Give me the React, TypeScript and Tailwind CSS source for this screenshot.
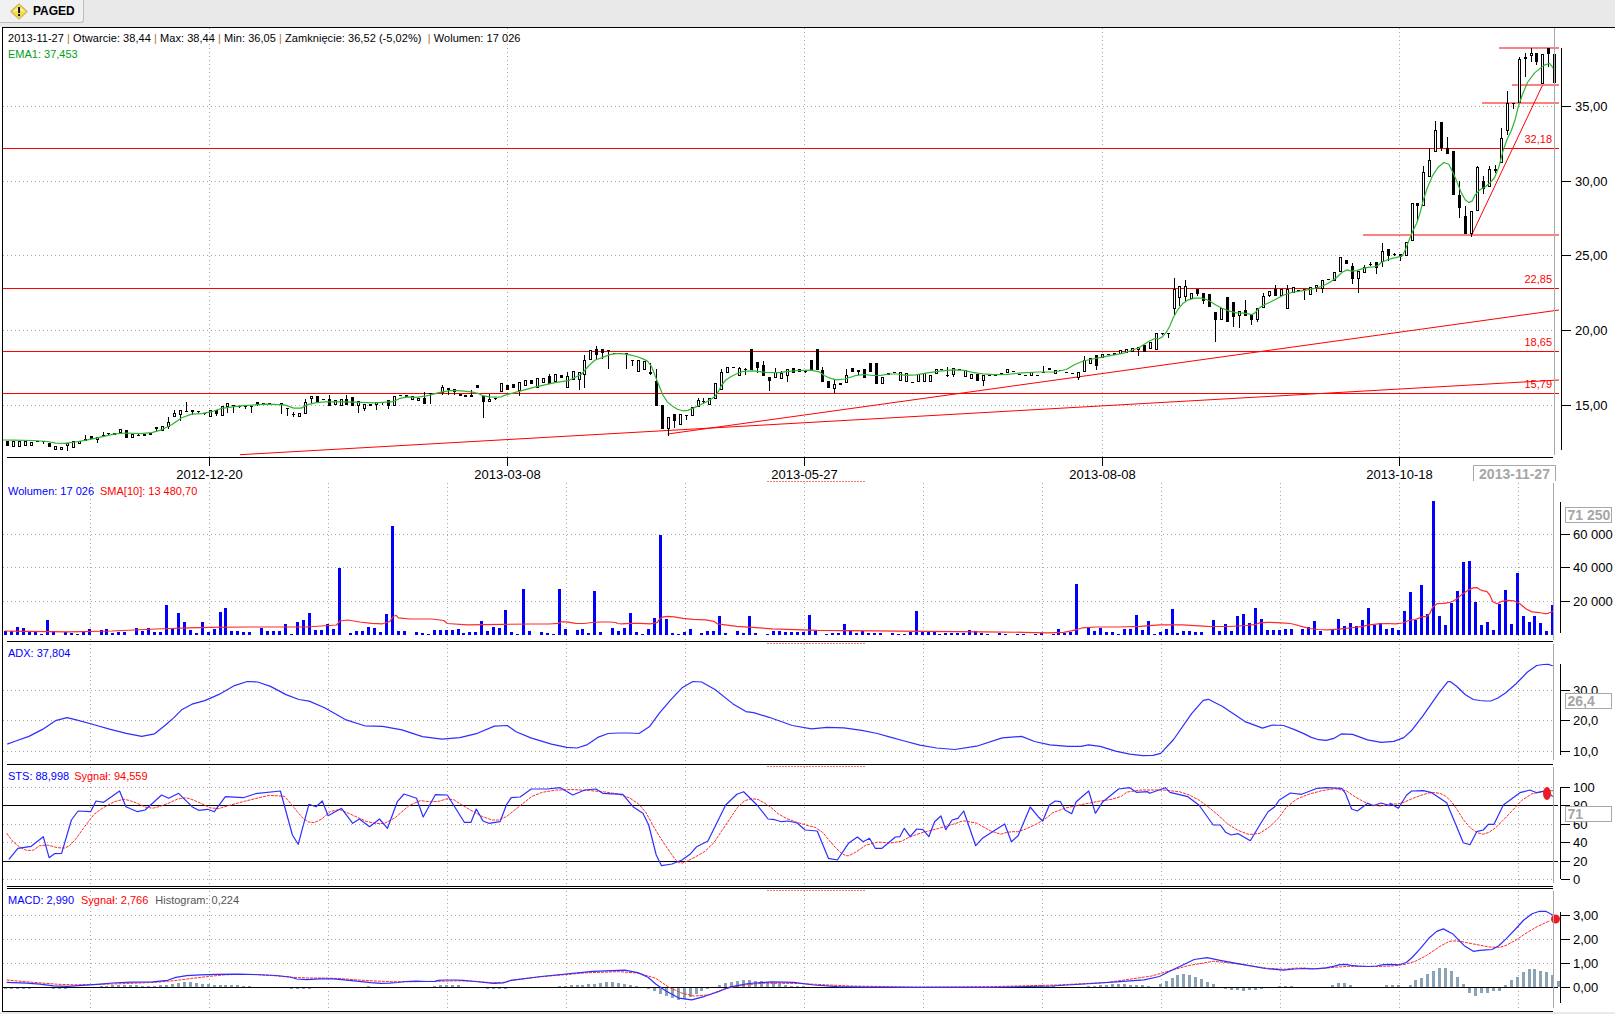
type Candle = [number, number, number, number?, number?];

// candle data read off the chart, [filled, bodyTop, bodyBottom, wickTop, wickBottom], y = base + v / 3
const seg1: Candle[] = [
  [1,422,437],[0,422,440],[0,422,440],[0,422,437],[0,425,437],[1,424,424],[1,424,424,424,432],[1,430,440],[0,437,449],[0,440,449],
  [0,428,437,428,452],[0,422,443],[0,422,431],[1,418,422,405,422],[1,407,418],[0,410,420,410,428],[1,406,406,395,406],[1,400,400,400,407],[0,398,406],[0,386,398],
  [1,390,413],[0,403,413],[1,405,406,402,409],[1,403,407],[0,398,405],[1,380,388,380,392],[0,379,394],[0,367,382,352,386],[0,340,350,330,350],[0,331,344,331,362],
  [1,332,332,306,332],[1,331,336,331,344],[1,332,332,332,340],[1,338,338,338,344],[0,331,350],[1,331,342,331,347],[0,319,347],[0,310,320,310,338],[1,316,316,316,338],[1,318,318,318,325],
  [1,318,322,318,326],[1,318,318,318,338],[1,307,314,307,318],[1,310,310],[0,310,316],[1,311,311],[0,310,316,310,341],[1,325,325,325,347],[1,343,346,336,352],[0,340,350],
  [0,307,341,298,341],[0,289,297,289,312],[1,289,306],[1,296,296],[1,296,317,286,317],[0,301,316],[0,297,317],[1,296,316,286,316],[1,292,317],[0,304,317,304,338],
  [0,313,327,313,332],[0,313,317],[0,307,314,307,330],[1,305,305,305,316],[1,300,317,300,326],[0,288,317],[1,286,286],[0,286,292],[0,289,301],[0,295,302],
  [1,293,312,277,312],[1,278,278,278,311],[1,278,278],[0,262,278,255,285],[1,263,270,263,286],[1,268,277,268,286],[1,281,288],[1,286,290],[1,284,290,270,290],[1,256,263],
  [1,287,305,287,353],[0,296,305,283,305],[1,293,297,293,300],
];
const seg2: Candle[] = [
  [0,249,276],[1,255,270],[1,252,264],[0,246,273,246,288],[0,240,258],[1,240,252],[0,234,264],[0,234,249],[1,228,252,222,252],[0,222,246],
  [1,225,234],[0,228,264,216,264],[0,213,240],[0,216,240,225,270],[0,180,225,165,264],[0,150,180],[1,147,165,138,180],
];
const seg3: Candle[] = [
  [1,88,100,88,118],[1,90,94,90,146],[1,98,98],[1,98,98],[1,100,100,100,146],[1,120,120,120,137],[0,120,157],[0,122,150],[0,155,162,128,166],[1,183,258,148,258],
  [1,256,326],[0,291,326,291,347],[1,283,302,283,324],[0,283,314],[1,286,286,286,300],[0,262,287],[0,240,262,235,262],[1,243,245,235,252],[0,234,254],[0,190,236],
  [0,155,209,148,209],[0,142,160],[1,140,145],[0,145,167,142,167],[1,147,147,145,165],[1,88,150],[1,127,145,127,158],[1,135,168,122,168],[1,172,182,172,212],[0,157,173,145,173],
  [0,158,176,152,176],[0,148,168,148,185],[1,145,160],[0,148,155],[1,153,153,150,160],[1,120,150],[1,88,150],[1,150,186,140,186],[1,182,203],[0,193,208,180,218],
  [1,190,194],[0,165,190,147,190],[1,145,155],[0,150,155,150,165],[1,147,173],[1,130,155],[1,130,192],[0,170,192],[0,158,165],[1,155,155],
  [0,155,183],[0,158,187],[1,187,187],[0,162,187],[0,160,187],[0,165,187],[0,146,162],[1,146,146],[1,165,167,142,172],[0,145,165,145,170],
  [1,148,148],[0,150,170],[0,162,178],[1,163,182],[0,166,182,166,197],[1,165,165],[1,165,165],
];
const seg4: Candle[] = [
  [1,219,219],[0,207,219],[1,213,213],[1,222,222],[1,225,225],[0,216,228],[1,225,225],[1,216,216,198,216],[1,204,210],[0,210,222],
  [1,210,210],[1,216,216],[1,219,219],[0,216,234,216,240],[0,180,216,168,216],[0,174,192],[1,165,198,165,210],[0,162,174],[1,162,162],[0,159,165],
  [0,150,162],[0,147,159],[0,144,156],[0,141,150,141,168],[1,135,156],[0,126,147],
];
const seg5: Candle[] = [
  [0,370,420],[1,370,370,370,375],[1,370,372,370,385],[0,238,296,205,315],[0,228,265,228,288],[0,229,260,210,272],[0,250,268],[1,238,252,238,258],[1,250,272,250,282],[1,252,290],
  [1,305,330,305,395],[0,294,330],[1,262,335],[1,277,322,277,350],[0,304,317,304,353],[1,300,317,270,317],[1,316,330,316,345],[0,295,330,295,335],[0,258,295,250,295],[0,244,258,244,262],
  [1,238,258,225,258],[0,238,258],[0,238,298,225,298],[0,232,248],[1,240,240],[1,238,238,238,270],[0,232,254],[0,224,234,224,246],[0,210,236,210,250],[1,208,208],
  [0,186,214],[0,141,186],[1,151,162],[1,168,206,158,222],[0,182,208,182,248],[0,172,190,166,190],[1,162,162,155,168],[1,157,174,157,193],[0,124,157,100,170],[1,117,139,117,153],
  [1,133,133,128,138],[1,133,140,133,152],
];
const seg6: Candle[] = [
  [0,667,707],[0,550,664],[1,550,557,550,600],[0,455,557,438,557],[0,421,470,385,470],[0,331,395,303,395],[1,307,385,307,392],[1,385,401,351,401],[1,394,524],[1,526,564,484,595],
  [1,589,643,558,643],[0,574,643,574,652],[0,442,572,438,572],[1,484,506,468,522],[0,448,500,438,500],[1,447,452,436,458],[0,355,430,324,430],[0,250,334,214,344],[1,248,248,248,268],[0,118,248,112,248],
  [0,110,116,100,170],[0,100,107,85,125],[1,100,125,100,135],[0,103,193],[1,85,103,85,140],[0,103,190],
];

const candleX = (i: number) => 7.3 + i * 5.95;

const segments: [Candle[], number, number][] = [
  [seg1, 0, 300],
  [seg2, 83, 300],
  [seg3, 100, 320],
  [seg4, 167, 300],
  [seg5, 193, 210],
  [seg6, 235, 20],
];

const candles = segments.flatMap(([list, start, base]) =>
  list.map(([fill, top, bot, wt, wb], n) => ({
    x: Math.round(candleX(start + n)),
    fill,
    top: Math.round(base + top / 3),
    bot: Math.round(base + bot / 3),
    wt: base + (wt ?? top) / 3,
    wb: base + (wb ?? bot) / 3,
  })),
);

type P = [number, number];
const crop = (x0: number, sx: number, y0: number, sy: number, list: number[]): P[] => {
  const out: P[] = [];
  for (let i = 0; i < list.length; i += 2) out.push([x0 + list[i] / sx, y0 + list[i + 1] / sy]);
  return out;
};
const seen = (list: number[]) => crop(0, 0.9703, 0, 0.9703, list);
const line = (pts: P[]) => pts.map(([x, y]) => `${x.toFixed(1)},${y.toFixed(1)}`).join(' ');

// corner cutting so the averaged series read as curves
const smooth = (pts: P[], rounds = 1): P[] => {
  let cur = pts;
  for (let r = 0; r < rounds; r++) {
    const next: P[] = [cur[0]];
    for (let i = 0; i < cur.length - 1; i++) {
      const [ax, ay] = cur[i];
      const [bx, by] = cur[i + 1];
      next.push([ax * 0.75 + bx * 0.25, ay * 0.75 + by * 0.25], [ax * 0.25 + bx * 0.75, ay * 0.25 + by * 0.75]);
    }
    next.push(cur[cur.length - 1]);
    cur = next;
  }
  return cur;
};

const ema = smooth([
  ...crop(0, 3, 300, 3, [8,420,130,422,180,432,240,424,300,412,360,398,440,402,500,385,560,343,620,340,680,320,840,310,895,329,930,310,990,304,1170,310,1210,290,1260,293,1340,272,1380,272,1430,278,1455,290,1500,292]),
  [505,395],[546,384],[577,379],[593,361],
  ...crop(600, 3, 320, 3, [0,115,40,100,80,102,120,112,150,127,170,180,195,240,225,265,255,275,290,260,330,240,350,225,370,185,400,165,440,150,520,160,580,152,650,150,680,172,720,182,780,162,830,168,880,160,930,168,1000,155,1080,148,1130,160,1200,165]),
  [1030,372],[1062,372],[1079,362],[1097,358],[1134,351],[1154,338],
  ...crop(1100, 3, 210, 3, [180,388,205,360,225,310,255,272,295,262,325,270,355,290,400,308,440,310,460,315,480,290,520,272,560,250,620,240,660,232,700,212,735,178,760,185,800,172,830,170,850,152,900,140]),
  ...crop(1300, 3, 20, 3, [310,705,335,640,355,600,375,520,405,450,440,420,465,470,490,535,512,552,530,515,565,495,590,465,615,370,640,320,660,240,690,170,745,125,760,145]),
] as P[]);

const volumeTops = [
  ...crop(0, 2.24, 490, 3, [108,390,375,345,399,369,413,396,453,396,494,366,507,354,640,402,666,396,680,390,693,369,733,402,760,234,868,372,881,108,1080,393,1133,360,1172,297,1253,297,1333,303,1413,369,1467,384,1480,135,1493,387]),
  ...crop(690, 2.24, 490, 3, [68,378,133,378,267,375,345,402,507,363,865,282,1000,375,1027,393,1078,357,1172,390,1199,402,1226,378,1240,372,1253,399,1266,354,1280,387]),
  ...crop(690, 2.24, 490, 3, [1399,393,1452,387,1480,399,1506,390]),
  ...crop(1300, 3, 430, 3, [8,597,26,592,44,573,62,603,80,614,98,597,116,567,134,588,152,579,170,588,188,570,206,534,224,585,242,579,260,597,275,594,293,600,311,543,329,486,347,570,365,465,383,552,401,213,419,558,437,585,455,519,473,483,491,396,509,393,527,516,545,585,563,576,581,600,599,522,617,480,632,582,650,429,668,558,686,576,704,558,722,579,740,603,756,525]),
];

const lowBars = [4,6,3,5,0,3,7,4,2,6,5,3,1,4,8,3,0,5,2,6,4,7,3,2,5,1,6,4,3,0];
const quiet = (i: number) => (i >= 165 && i <= 176 ? 0.25 : i >= 120 && i < 165 ? 0.6 : 1);
const volumes = Array.from({ length: 261 }, (_, i) => Math.round(lowBars[(i * 7 + (i >> 3)) % lowBars.length] * quiet(i)));
volumeTops.forEach(([x, y]) => {
  volumes[Math.round((x + 2 - 7.3) / 5.95)] = 634.7 - y;
});

const sma = smooth([
  [5,631],[90,632],[178,628],[220,627],[335,627],[341.5,619],[366,623],[388,624],[395,614],[399.5,619],[442,619],[449,625],
  [522,624],[558,624],[562,621],[580,624],[596,622],[615,622],[618,624],[634,623],[656,624],[661,617],[670,616],[687,619],[712,620],[719,625],
  [790,630],[900,631],[1010,632],[1060,633],[1075,630],[1085,627],[1130,627],[1170,624],[1220,627],[1255,625],
  [1261,622],[1288,623],[1297,625],
  ...crop(1300, 3, 430, 3, [0,588,40,598,95,600,185,590,205,585,245,580,300,582,330,570,350,568,365,560,385,560,403,521,440,520,465,512,495,485,527,470,545,482,565,485,583,525,615,510,650,513,688,545,720,548,740,552,760,543]),
] as P[]);

const adx = smooth([
  ...seen([7,722,35,712,60,695,80,700,115,710,145,716,165,700,180,685,205,678,235,661,255,662,285,678,305,681,345,704,380,705,420,718,455,715,488,701,505,713,545,725,565,726,585,712,605,711,625,712,645,685,668,661,685,662,720,690,735,692,780,708,810,705,845,710,870,717,900,725,935,728,985,712,1010,722,1045,725,1060,722,1090,731,1115,734,1130,730,1165,680,1175,678,1220,708,1240,702]),
  ...crop(1300, 3, 640, 3, [0,275,45,298,90,302,135,275,225,308,300,303,345,262,440,125,455,125,510,177,550,183,580,183,630,150,700,78,740,72,758,77]),
]);

const stsBlue = [
  ...crop(0, 2.24, 745, 3, [20,343,40,310,70,304,97,275,110,338,122,326,138,325,160,225,175,198,203,200,215,168,232,172,268,138,282,185,308,200,325,195,362,150,378,160,400,145,430,185,445,196,465,193,480,200,505,155,545,158,572,146,628,138,655,270,668,298,692,178,708,185,722,168,735,212,765,190,790,235,805,222,828,245,850,222,868,250,890,170,905,147,933,160,948,216,975,149,1002,150,1040,232,1055,232,1067,192,1082,228,1095,235,1120,230,1135,178,1145,158,1165,156,1190,132,1225,132,1255,128,1283,150,1310,135,1335,132,1350,145,1395,148,1418,185,1440,205,1453,240,1470,330,1482,362]),
  [672,864],[682,860],
  ...crop(690, 2.24, 745, 3, [0,328,15,305,40,288,80,180,105,148,120,140,150,180,175,222,190,224,205,230,220,228,240,234,258,255,285,258,310,340,330,345,355,295,375,276,388,290,402,280,415,310,430,310,460,276,470,275,480,250,493,275,508,252,522,254,535,275,548,230,562,213,573,254,587,225,600,220,613,198,640,302,655,280,705,237,720,290,735,272,762,186,780,215,790,228,805,180,818,168,830,170,840,195,855,206,865,170,893,138,908,205,925,170,960,132,985,128,1000,142,1025,140,1030,145,1065,128,1075,142,1115,155,1140,180,1172,240,1188,240,1200,262,1212,270,1228,266,1255,287,1280,232,1295,200,1310,185,1320,165,1345,144,1370,148,1405,130,1425,128,1460,130,1468,145,1482,192,1495,198,1518,175,1530,182,1548,174,1568,182]),
  ...crop(1300, 3, 640, 3, [270,490,295,505,320,465,335,453,370,452,395,458,440,488,470,560,490,608,510,614,530,575,550,570,565,553,582,553,610,495,660,458,690,450,710,458,740,452,758,470]),
] as P[];

const stsRed = smooth([
  ...crop(0, 2.24, 745, 3, [15,265,35,300,68,322,95,296,140,312,160,300,195,235,215,200,270,160,300,170,335,192,365,182,410,155,440,168,480,195,520,178,630,142,660,190,685,230,710,234,750,188,790,210,830,235,870,236,930,165,975,172,1010,158,1040,185,1095,225,1125,225,1165,182,1200,145,1260,132,1340,138,1400,150,1440,185,1470,260,1510,340]),
  [680,864],
  ...crop(690, 2.24, 745, 3, [0,345,45,310,80,240,115,170,145,158,175,180,205,215,250,237,290,250,320,300,345,332,360,332,405,290,465,295,500,270,575,244,625,222,690,270,715,260,740,260,790,228,820,195,900,172,960,160,985,135,1085,135,1130,155,1175,200,1215,250,1265,275,1310,235,1345,170,1400,140,1460,128,1500,165,1535,184,1568,180]),
  ...crop(1300, 3, 640, 3, [270,492,300,492,350,470,395,456,430,462,460,490,500,555,540,585,575,575,620,530,680,465,740,452,760,452]),
] as P[]);

const macdBlue = smooth([
  ...crop(0, 3, 850, 3, [20,397,100,400,180,410,270,405,360,397,490,395,540,378,620,373,735,372,860,378,900,390,980,385,1060,392,1130,400,1180,399,1230,393,1300,395,1320,390,1380,390,1420,394,1500,402]),
  ...seen([500,950,600,940,625,945,640,958,665,972,690,965,715,955,760,952,800,957,850,958,1000,958,1080,953,1120,950,1140,940,1165,928,1190,933,1240,942]),
  ...crop(1300, 3, 640, 3, [0,985,40,987,90,982,130,971,160,978,220,980,260,972,310,975,345,945,400,878,440,863,510,935,550,930,585,928,630,885,685,825,730,810,758,825]),
]);

const macdRed = smooth([
  ...crop(0, 3, 850, 3, [20,390,100,397,200,405,300,403,400,400,500,395,600,382,700,372,800,375,900,384,1000,384,1100,392,1200,396,1300,394,1400,392,1500,400]),
  ...seen([500,950,590,942,630,945,655,962,680,968,710,957,750,953,850,958,1000,957,1100,952,1170,932,1200,935,1240,941]),
  ...crop(1300, 3, 640, 3, [0,983,50,987,100,982,160,978,220,980,300,977,360,960,440,905,470,902,510,910,590,925,630,912,700,865,750,842]),
]);

// histogram runs: [first bar, heights...], negative goes below the zero line
const histRuns: number[][] = [
  [0,-1,-1,-1,-1,-1,0,0,0,-1,-1,-1],
  [16,1,1,2,2,2,2,2,1,1,1,2,2,3,4,5,5,4,3,3,2,2,2,2,2,1,1],
  [48,-1,-1,-1,-1],
  [61,1],
  [72,1,2,2,2,2],
  [81,-1,-1,-1,-1],
  [93,1,1,2,2,2,3,3,4,5,5,4,3,2,1],
  [108,-1,-3,-6,-8,-10,-12,-11,-9,-6,-3,-1],
  [120,2,4,5,6,7,7,6,6,5,4,3,2,1,1,1],
  [172,1,2,2,1,1],
  [182,1,1,2,2,3,3,3,2,2,2,1],
  [194,3,6,9,12,13,12,10,8,5,3],
  [205,-1,-2,-2,-3,-2,-2,-1],
  [214,1,1,1],
  [223,2,4,4,2,0,0,0,0,0,2,2,2,0,2,7,9,13,16,19,19,16,10,3,-5,-8,-5,-5,-3,-3,2,7,10,15,18,18,16,15,12,6],
];
const hist = histRuns.flatMap(([start, ...hs]) => hs.map((h, n) => ({ i: start + n, h })));

const mainGridX = [209.5, 507.5, 804.5, 1102.5, 1399.5];
const lowerGridX = [90.5, 209.5, 328.5, 447.5, 566.5, 685.5, 804.5, 923.5, 1042.5, 1161.5, 1280.5, 1399.5, 1518.5];
const dates = ['2012-12-20', '2013-03-08', '2013-05-27', '2013-08-08', '2013-10-18'];

const Dotted = ({ x1, y1, x2, y2 }: { x1: number; y1: number; x2: number; y2: number }) => (
  <line x1={x1} y1={y1} x2={x2} y2={y2} stroke="#a8a8a8" strokeDasharray="1 3" shapeRendering="crispEdges" />
);

const Solid = ({ x1, y1, x2, y2, color = '#000000' }: { x1: number; y1: number; x2: number; y2: number; color?: string }) => (
  <line x1={x1} y1={y1} x2={x2} y2={y2} stroke={color} shapeRendering="crispEdges" />
);

const Hatch = ({ y }: { y: number }) => (
  <line x1={767} y1={y} x2={865} y2={y} stroke="#ff7a7a" strokeDasharray="2 1" shapeRendering="crispEdges" />
);

const Tick = ({ y, label, axis = 1560.5, len = 9, tx = 1573 }: { y: number; label: string; axis?: number; len?: number; tx?: number }) => (
  <g>
    <Solid x1={axis} y1={y} x2={axis + len} y2={y} />
    <text x={tx} y={y + 4} className="fill-black text-[13px]">{label}</text>
  </g>
);

const ValueBox = ({ y, label }: { y: number; label: string }) => (
  <g>
    <rect x={1565.5} y={y + 0.5} width={46} height={15} fill="#ffffff" stroke="#a8a8a8" shapeRendering="crispEdges" />
    <text x={1567.5} y={y + 13} className="fill-[#a6a6a6] text-[14px] font-bold">{label}</text>
  </g>
);

const Series = ({ pts, color, width = 1.2, dash }: { pts: P[]; color: string; width?: number; dash?: string }) => (
  <polyline points={line(pts)} fill="none" stroke={color} strokeWidth={width} strokeLinejoin="round" strokeDasharray={dash} />
);

const PriceLevel = ({ y, label }: { y: number; label: string }) => (
  <g>
    <Solid x1={3} y1={y} x2={1559} y2={y} color="#ff0000" />
    <text x={1552} y={y - 6} textAnchor="end" className="fill-[#ff0000] text-[11px]">{label}</text>
  </g>
);

const Level = ({ y, from }: { y: number; from: number }) => (
  <rect x={from} y={y - 1} width={1559 - from} height={2} fill="#ff8080" shapeRendering="crispEdges" />
);

const MainChart = () => (
  <svg viewBox="3 28 1612 455" className="block h-full w-full">
    {[106.5, 181.5, 255.5, 330.5, 405.5].map(y => <Dotted key={y} x1={3} y1={y} x2={1554} y2={y} />)}
    {mainGridX.map(x => <Dotted key={x} x1={x} y1={28} x2={x} y2={457} />)}

    <PriceLevel y={148.5} label="32,18" />
    <PriceLevel y={288.5} label="22,85" />
    <PriceLevel y={351.5} label="18,65" />
    <PriceLevel y={393.5} label="15,79" />

    <Level y={235} from={1363} />
    <Level y={103} from={1482} />
    <Level y={85} from={1512} />
    <Level y={48} from={1499} />

    <line x1={240} y1={454.7} x2={1559} y2={380} stroke="#ff0000" />
    <line x1={667.7} y1={434} x2={1559} y2={310} stroke="#ff0000" />
    <line x1={1471.7} y1={235} x2={1542.3} y2={85.7} stroke="#ff0000" />

    {candles.map((c, i) => (
      <g key={i} shapeRendering="crispEdges">
        <line x1={c.x + 0.5} y1={c.wt} x2={c.x + 0.5} y2={c.wb} stroke="#000000" />
        {c.top === c.bot ? (
          <rect x={c.x - 1} y={c.top} width={3} height={1} fill="#000000" />
        ) : c.fill ? (
          <rect x={c.x - 1} y={c.top} width={3} height={c.bot - c.top} fill="#000000" />
        ) : (
          <rect x={c.x - 0.5} y={c.top + 0.5} width={2} height={c.bot - c.top - 1} fill="#ffffff" stroke="#000000" />
        )}
      </g>
    ))}

    <Series pts={ema} color="#2fb52f" />

    <Solid x1={1554.5} y1={28} x2={1554.5} y2={455} color="#a8a8a8" />
    <Solid x1={1561.5} y1={48} x2={1561.5} y2={450} />
    <Solid x1={7} y1={457.5} x2={1553} y2={457.5} />
    {mainGridX.map((x, i) => (
      <g key={x}>
        <Solid x1={x} y1={457} x2={x} y2={466} />
        <text x={x} y={479} textAnchor="middle" className="fill-black text-[13px]">{dates[i]}</text>
      </g>
    ))}
    {[[106.5, '35,00'], [181.5, '30,00'], [255.5, '25,00'], [330.5, '20,00'], [405.5, '15,00']].map(([y, label]) => (
      <Tick key={label} y={y as number} label={label as string} axis={1561.5} tx={1575} />
    ))}

    <path d="M1473.5 481V465.5H1555.5V481" fill="#ffffff" stroke="#a8a8a8" shapeRendering="crispEdges" />
    <text x={1514.5} y={479} textAnchor="middle" className="fill-[#a6a6a6] text-[14px] font-bold">2013-11-27</text>
    <Hatch y={481.5} />
  </svg>
);

const VolumeChart = () => (
  <svg viewBox="3 483 1612 159" className="block h-full w-full">
    {[534.5, 567.5, 601.5].map(y => <Dotted key={y} x1={3} y1={y} x2={1553} y2={y} />)}
    {lowerGridX.map(x => <Dotted key={x} x1={x} y1={483} x2={x} y2={641} />)}
    {volumes.map((h, i) =>
      h > 0 ? (
        <rect key={i} x={Math.round(candleX(i) - 2) - 1} y={634.7 - h} width={3} height={h} fill="#0000ff" shapeRendering="crispEdges" />
      ) : null,
    )}
    <Series pts={sma} color="#ff2a2a" />
    <Solid x1={1553.5} y1={483} x2={1553.5} y2={640} color="#a8a8a8" />
    <Solid x1={1560.5} y1={502} x2={1560.5} y2={633} />
    <Tick y={534.5} label="60 000" />
    <Tick y={567.5} label="40 000" />
    <Tick y={601.5} label="20 000" />
    <ValueBox y={507} label="71 250" />
    <Solid x1={7} y1={641.5} x2={1553} y2={641.5} />
  </svg>
);

const AdxChart = () => (
  <svg viewBox="3 642 1612 123" className="block h-full w-full">
    <Hatch y={643.5} />
    {[690.5, 720.5, 751.5].map(y => <Dotted key={y} x1={3} y1={y} x2={1553} y2={y} />)}
    {lowerGridX.map(x => <Dotted key={x} x1={x} y1={644} x2={x} y2={764} />)}
    <Series pts={adx} color="#2e2eff" />
    <Solid x1={1553.5} y1={644} x2={1553.5} y2={760} color="#a8a8a8" />
    <Solid x1={1560.5} y1={664} x2={1560.5} y2={755} />
    <Tick y={690.5} label="30,0" />
    <Tick y={720.5} label="20,0" />
    <Tick y={751.5} label="10,0" />
    <ValueBox y={693} label="26,4" />
    <Solid x1={7} y1={764.5} x2={1553} y2={764.5} />
  </svg>
);

const StsChart = () => (
  <svg viewBox="3 765 1612 124" className="block h-full w-full">
    <Hatch y={766.5} />
    {[787.5, 824.5, 842.5, 879.5].map(y => <Dotted key={y} x1={3} y1={y} x2={1553} y2={y} />)}
    {lowerGridX.map(x => <Dotted key={x} x1={x} y1={767} x2={x} y2={886} />)}
    <Solid x1={3} y1={805.5} x2={1558} y2={805.5} />
    <Solid x1={3} y1={861.5} x2={1558} y2={861.5} />
    <Series pts={stsRed} color="#ff2a2a" width={1} dash="3 1" />
    <Series pts={stsBlue} color="#2e2eff" />
    <ellipse cx={1547} cy={793.5} rx={4} ry={6.5} fill="#ed1c24" />
    <Solid x1={1553.5} y1={767} x2={1553.5} y2={883} color="#a8a8a8" />
    <Solid x1={1560.5} y1={787} x2={1560.5} y2={879} />
    <Tick y={787.5} label="100" />
    <Tick y={805.5} label="80" />
    <Tick y={824.5} label="60" />
    <Tick y={842.5} label="40" />
    <Tick y={861.5} label="20" />
    <Tick y={879.5} label="0" />
    <ValueBox y={806} label="71" />
    <Solid x1={7} y1={886.5} x2={1553} y2={886.5} />
    <Solid x1={7} y1={888.5} x2={1553} y2={888.5} />
  </svg>
);

const MacdChart = () => (
  <svg viewBox="3 889 1612 123" className="block h-full w-full">
    <Hatch y={890.5} />
    {[915.5, 939.5, 963.5].map(y => <Dotted key={y} x1={3} y1={y} x2={1553} y2={y} />)}
    {lowerGridX.map(x => <Dotted key={x} x1={x} y1={891} x2={x} y2={1010} />)}
    {hist.map(({ i, h }) =>
      h !== 0 ? (
        <rect
          key={i}
          x={Math.round(candleX(i) - 2) - 1}
          y={h > 0 ? 987 - h : 988}
          width={3}
          height={Math.abs(h)}
          fill="#8aa3b5"
          shapeRendering="crispEdges"
        />
      ) : null,
    )}
    <Solid x1={3} y1={987.5} x2={1558} y2={987.5} />
    <Series pts={macdRed} color="#ff2a2a" width={1} dash="3 1" />
    <Series pts={macdBlue} color="#2e2eff" />
    <circle cx={1555.5} cy={919} r={4.5} fill="#ed1c24" />
    <Solid x1={1553.5} y1={891} x2={1553.5} y2={1008} color="#a8a8a8" />
    <Solid x1={1560.5} y1={912} x2={1560.5} y2={1003} />
    <Tick y={915.5} label="3,00" />
    <Tick y={939.5} label="2,00" />
    <Tick y={963.5} label="1,00" />
    <Tick y={987.5} label="0,00" />
    <Solid x1={3} y1={1011.5} x2={1553} y2={1011.5} />
  </svg>
);

const Sep = () => <span className="text-[#b0702a]">|</span>;

export default function App() {
  return (
    <div className="flex h-[1014px] w-[1615px] flex-col overflow-hidden bg-white font-['Liberation_Sans',Arial,sans-serif] text-[11px] leading-[14px]">
      <div className="flex h-[27px] items-start bg-[#e9e9e9]">
        <div className="flex h-[23px] w-[84px] items-center gap-[5px] rounded-br-[3px] border-r border-b border-[#bdbdbd] bg-[#f1f1f1] pl-[10px] text-[12px] font-bold text-black">
          <svg width="18" height="17" viewBox="0 0 17 16">
            <path d="M8.5 .8 16.2 8 8.5 15.2 .8 8Z" fill="#f5dc4a" stroke="#c9b55a" strokeLinejoin="round" />
            <path d="M8.5 3 14 8 8.5 8 3 8Z" fill="#fbf0a0" />
            <rect x="7.6" y="3.8" width="1.9" height="5.6" fill="#111111" />
            <rect x="7.6" y="10.4" width="1.9" height="1.9" fill="#111111" />
          </svg>
          PAGED
        </div>
      </div>

      <div className="ml-[2px] h-[985px] border-t border-l border-black">
        <section className="relative h-[455px]">
          <MainChart />
          <div className="absolute top-[3px] left-[5px] flex flex-col gap-[2px]">
            <p className="whitespace-pre tracking-[0.05px] text-black">
              2013-11-27 <Sep /> Otwarcie: 38,44 <Sep /> Max: 38,44 <Sep /> Min: 36,05 <Sep /> Zamknięcie: 36,52 (-5,02%)  <Sep /> Wolumen: 17 026
            </p>
            <p className="text-[#00a020]">EMA1: 37,453</p>
          </div>
        </section>

        <section className="relative h-[159px]">
          <VolumeChart />
          <p className="absolute top-[1px] left-[5px] flex gap-[6px]">
            <span className="text-[#0000ff]">Wolumen: 17 026</span>
            <span className="text-[#ff0000]">SMA[10]: 13 480,70</span>
          </p>
        </section>

        <section className="relative h-[123px]">
          <AdxChart />
          <p className="absolute top-[4px] left-[5px] text-[#0000ff]">ADX: 37,804</p>
        </section>

        <section className="relative h-[124px]">
          <StsChart />
          <p className="absolute top-[4px] left-[5px] flex gap-[5px]">
            <span className="text-[#0000ff]">STS: 88,998</span>
            <span className="text-[#ff0000]">Sygnał: 94,559</span>
          </p>
        </section>

        <section className="relative h-[123px]">
          <MacdChart />
          <p className="absolute top-[4px] left-[5px] flex gap-[7px]">
            <span className="text-[#0000ff]">MACD: 2,990</span>
            <span className="text-[#ff0000]">Sygnał: 2,766</span>
            <span className="text-[#555555]">Histogram: 0,224</span>
          </p>
        </section>
      </div>

      <div className="flex-1 bg-[#e9e9e9]" />
    </div>
  );
}
